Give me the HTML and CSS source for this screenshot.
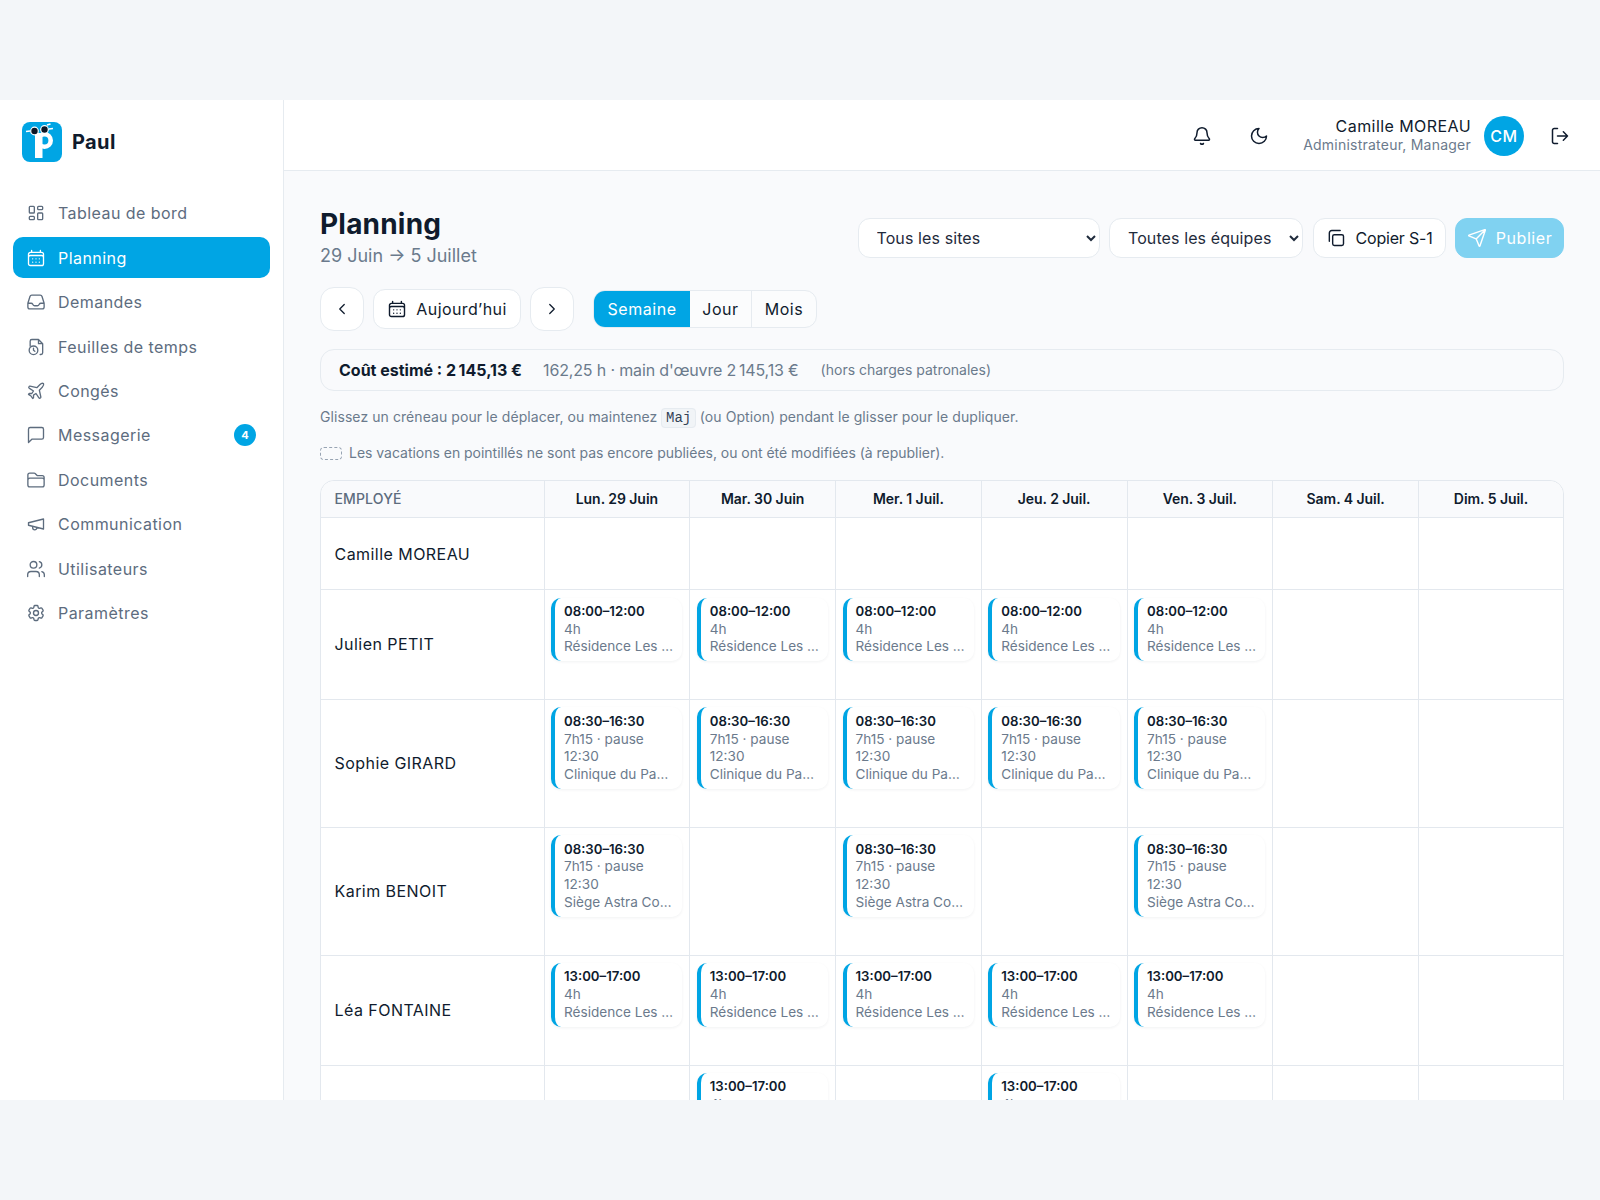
FILE: index.html
```html
<!DOCTYPE html>
<html lang="fr">
<head>
<meta charset="utf-8">
<title>Paul - Planning</title>
<link rel="stylesheet" href="styles.css">
</head>
<body>
<div class="app">
  <aside class="sidebar">
    <div class="brand">
      <svg class="logo" viewBox="0 0 40 40">
        <rect width="40" height="40" rx="8" fill="#00a5e4"/>
        <path d="M8 11l5 1.5V36h7.5V11z" fill="#fff"/>
        <circle cx="22.5" cy="18.5" r="6.2" fill="none" stroke="#fff" stroke-width="4.6"/>
        <path d="M4 9.5l4-.5M25 3l3.5-1M27 7l4-.5" stroke="#fff" stroke-width="1.4" fill="none"/>
        <circle cx="12.5" cy="9" r="4.4" fill="#fff"/><circle cx="12.5" cy="9" r="3.2" fill="#0d1726"/>
        <circle cx="22.5" cy="7.5" r="4.4" fill="#fff"/><circle cx="22.5" cy="7.5" r="3.2" fill="#0d1726"/>
      </svg>
      <span class="brand-name">Paul</span>
    </div>
    <nav class="nav">
      <a class="nav-item"><svg class="ico" viewBox="0 0 24 24"><path d="M5 4h4a1 1 0 0 1 1 1v6a1 1 0 0 1-1 1H5a1 1 0 0 1-1-1V5a1 1 0 0 1 1-1M5 16h4a1 1 0 0 1 1 1v2a1 1 0 0 1-1 1H5a1 1 0 0 1-1-1v-2a1 1 0 0 1 1-1M15 12h4a1 1 0 0 1 1 1v6a1 1 0 0 1-1 1h-4a1 1 0 0 1-1-1v-6a1 1 0 0 1 1-1M15 4h4a1 1 0 0 1 1 1v2a1 1 0 0 1-1 1h-4a1 1 0 0 1-1-1V5a1 1 0 0 1 1-1"/></svg>Tableau de bord</a>
      <a class="nav-item active"><svg class="ico" viewBox="0 0 24 24"><path d="M6.75 3v2.25M17.25 3v2.25M3 18.75V7.5a2.25 2.25 0 0 1 2.25-2.25h13.5A2.25 2.25 0 0 1 21 7.5v11.25m-18 0A2.25 2.25 0 0 0 5.25 21h13.5A2.25 2.25 0 0 0 21 18.75m-18 0v-7.5A2.25 2.25 0 0 1 5.25 9h13.5A2.25 2.25 0 0 1 21 11.25v7.5M8 13h.01M12 13h.01M16 13h.01M8 17h.01M12 17h.01M16 17h.01"/></svg>Planning</a>
      <a class="nav-item"><svg class="ico" viewBox="0 0 24 24"><path d="M2.25 13.5h3.86a2.25 2.25 0 0 1 2.012 1.244l.256.512a2.25 2.25 0 0 0 2.013 1.244h3.218a2.25 2.25 0 0 0 2.013-1.244l.256-.512a2.25 2.25 0 0 1 2.013-1.244h3.859m-19.5.338V18a2.25 2.25 0 0 0 2.25 2.25h15A2.25 2.25 0 0 0 21.75 18v-4.162c0-.224-.034-.447-.1-.661L19.24 5.338a2.25 2.25 0 0 0-2.15-1.588H6.911a2.25 2.25 0 0 0-2.15 1.588L2.35 13.177a2.25 2.25 0 0 0-.1.661Z"/></svg>Demandes</a>
      <a class="nav-item"><svg class="ico" viewBox="0 0 24 24"><path d="M5 11V5a2 2 0 0 1 2-2h8l5 5v11a2 2 0 0 1-2 2h-1M15 3v5h5"/><circle cx="9" cy="16" r="5.2"/><path d="M9 13.5V16l1.6 1.2"/></svg>Feuilles de temps</a>
      <a class="nav-item"><svg class="ico" viewBox="0 0 24 24"><path d="M17.8 19.2 16 11l3.5-3.5C21 6 21.5 4 21 3c-1-.5-3 0-4.5 1.5L13 8 4.8 6.2c-.5-.1-.9.1-1.1.5l-.3.5c-.2.5-.1 1 .3 1.3L9 12l-2 3H4l-1 1 3 2 2 3 1-1v-3l3-2 3.5 5.3c.3.4.8.5 1.3.3l.5-.2c.4-.3.6-.7.5-1.2z"/></svg>Congés</a>
      <a class="nav-item"><svg class="ico" viewBox="0 0 24 24"><path d="M21 15a2 2 0 0 1-2 2H7l-4 4V5a2 2 0 0 1 2-2h14a2 2 0 0 1 2 2z"/></svg>Messagerie<span class="badge">4</span></a>
      <a class="nav-item"><svg class="ico" viewBox="0 0 24 24"><path d="M2.25 12.75V12A2.25 2.25 0 0 1 4.5 9.75h15A2.25 2.25 0 0 1 21.75 12v.75m-8.69-6.44-2.12-2.12a1.5 1.5 0 0 0-1.061-.44H4.5A2.25 2.25 0 0 0 2.25 6v12a2.25 2.25 0 0 0 2.25 2.25h15A2.25 2.25 0 0 0 21.75 18V9a2.25 2.25 0 0 0-2.25-2.25h-5.379a1.5 1.5 0 0 1-1.06-.44Z"/></svg>Documents</a>
      <a class="nav-item"><svg class="ico" viewBox="0 0 24 24"><path d="M3 10.5v3L21 18V6zM8 15v1.5a2.5 2.5 0 0 0 5 0V16"/></svg>Communication</a>
      <a class="nav-item"><svg class="ico" viewBox="0 0 24 24"><path d="M16 21v-2a4 4 0 0 0-4-4H6a4 4 0 0 0-4 4v2M16 3.128a4 4 0 0 1 0 7.744M22 21v-2a4 4 0 0 0-3-3.87"/><circle cx="9" cy="7" r="4"/></svg>Utilisateurs</a>
      <a class="nav-item"><svg class="ico" viewBox="0 0 24 24"><path d="M9.594 3.94c.09-.542.56-.94 1.11-.94h2.593c.55 0 1.02.398 1.11.94l.213 1.281c.063.374.313.686.645.87.074.04.147.083.22.127.325.196.72.257 1.075.124l1.217-.456a1.125 1.125 0 0 1 1.37.49l1.296 2.247a1.125 1.125 0 0 1-.26 1.431l-1.003.827c-.293.241-.438.613-.43.992a7.723 7.723 0 0 1 0 .255c-.008.378.137.75.43.991l1.004.827c.424.35.534.955.26 1.43l-1.298 2.247a1.125 1.125 0 0 1-1.369.491l-1.217-.456c-.355-.133-.75-.072-1.076.124a6.47 6.47 0 0 1-.22.128c-.331.183-.581.495-.644.869l-.213 1.281c-.09.543-.56.94-1.11.94h-2.594c-.55 0-1.019-.398-1.11-.94l-.213-1.281c-.062-.374-.312-.686-.644-.87a6.52 6.52 0 0 1-.22-.127c-.325-.196-.72-.257-1.076-.124l-1.217.456a1.125 1.125 0 0 1-1.369-.49l-1.297-2.247a1.125 1.125 0 0 1 .26-1.431l1.004-.827c.292-.24.437-.613.43-.991a6.932 6.932 0 0 1 0-.255c.007-.38-.138-.751-.43-.992l-1.004-.827a1.125 1.125 0 0 1-.26-1.43l1.297-2.247a1.125 1.125 0 0 1 1.37-.491l1.216.456c.356.133.751.072 1.076-.124.072-.044.146-.086.22-.128.332-.183.582-.495.644-.869l.214-1.28Z"/><path d="M15 12a3 3 0 1 1-6 0 3 3 0 0 1 6 0Z"/></svg>Paramètres</a>
    </nav>
  </aside>
  <div class="main">
    <header class="topbar">
      <button class="icon-btn"><svg class="ico-top" viewBox="0 0 24 24"><path d="M10.268 21a2 2 0 0 0 3.464 0M3.262 15.326A1 1 0 0 0 4 17h16a1 1 0 0 0 .74-1.673C19.41 13.956 18 12.499 18 8A6 6 0 0 0 6 8c0 4.499-1.411 5.956-2.738 7.326"/></svg></button>
      <button class="icon-btn"><svg class="ico-top" viewBox="0 0 24 24"><path d="M12 3a6 6 0 0 0 9 9 9 9 0 1 1-9-9Z"/></svg></button>
      <div class="user">
        <div class="user-name">Camille MOREAU</div>
        <div class="user-role">Administrateur, Manager</div>
      </div>
      <div class="avatar">CM</div>
      <button class="icon-btn"><svg class="ico-top" viewBox="0 0 24 24"><path d="M9 21H5a2 2 0 0 1-2-2V5a2 2 0 0 1 2-2h4M16 17l5-5-5-5M21 12H9"/></svg></button>
    </header>
    <main class="content">
      <div class="page-head">
        <div>
          <h1 class="title">Planning</h1>
          <div class="subtitle">29 Juin → 5 Juillet</div>
        </div>
        <div class="actions">
          <select class="select select-site"><option>Tous les sites</option></select>
          <select class="select select-team"><option>Toutes les équipes</option></select>
          <button class="btn btn-copy"><svg class="ico-btn" viewBox="0 0 24 24"><rect x="8" y="8" width="13" height="13" rx="2"/><path d="M4 16V6a3 3 0 0 1 3-3h10"/></svg>Copier S-1</button>
          <button class="btn btn-primary"><svg class="ico-btn" viewBox="0 0 24 24"><path d="M14.536 21.686a.5.5 0 0 0 .937-.024l6.5-19a.496.496 0 0 0-.635-.635l-19 6.5a.5.5 0 0 0-.024.937l7.93 3.18a2 2 0 0 1 1.112 1.11zM21.854 2.147l-10.94 10.939"/></svg>Publier</button>
        </div>
      </div>
      <div class="toolbar">
        <button class="btn btn-square"><svg class="ico-btn" viewBox="0 0 24 24"><path d="m15 18-6-6 6-6"/></svg></button>
        <button class="btn btn-today"><svg class="ico-btn" viewBox="0 0 24 24"><path d="M6.75 3v2.25M17.25 3v2.25M3 18.75V7.5a2.25 2.25 0 0 1 2.25-2.25h13.5A2.25 2.25 0 0 1 21 7.5v11.25m-18 0A2.25 2.25 0 0 0 5.25 21h13.5A2.25 2.25 0 0 0 21 18.75m-18 0v-7.5A2.25 2.25 0 0 1 5.25 9h13.5A2.25 2.25 0 0 1 21 11.25v7.5M8 13h.01M12 13h.01M16 13h.01M8 17h.01M12 17h.01M16 17h.01"/></svg>Aujourd’hui</button>
        <button class="btn btn-square"><svg class="ico-btn" viewBox="0 0 24 24"><path d="m9 18 6-6-6-6"/></svg></button>
        <div class="segment">
          <span class="seg seg-week">Semaine</span>
          <span class="seg seg-day">Jour</span>
          <span class="seg seg-month">Mois</span>
        </div>
      </div>
      <div class="cost">
        <strong class="cost-main">Coût estimé : 2&#8201;145,13 €</strong>
        <span class="cost-detail">162,25 h · main d'œuvre 2&#8201;145,13 €</span>
        <span class="cost-note">(hors charges patronales)</span>
      </div>
      <p class="hint">Glissez un créneau pour le déplacer, ou maintenez <kbd class="kbd">Maj</kbd> (ou Option) pendant le glisser pour le dupliquer.</p>
      <p class="legend"><span class="dashed"></span>Les vacations en pointillés ne sont pas encore publiées, ou ont été modifiées (à republier).</p>
      <div class="grid">
        <div class="row row-head">
          <div class="cell cell-emp head-emp">EMPLOYÉ</div>
          <div class="cell head-day">Lun. 29 Juin</div>
          <div class="cell head-day">Mar. 30 Juin</div>
          <div class="cell head-day">Mer. 1 Juil.</div>
          <div class="cell head-day">Jeu. 2 Juil.</div>
          <div class="cell head-day">Ven. 3 Juil.</div>
          <div class="cell head-day">Sam. 4 Juil.</div>
          <div class="cell head-day">Dim. 5 Juil.</div>
        </div>
        <div class="row row-empty">
          <div class="cell cell-emp">Camille MOREAU</div>
          <div class="cell"></div><div class="cell"></div><div class="cell"></div><div class="cell"></div><div class="cell"></div><div class="cell"></div><div class="cell"></div>
        </div>
        <div class="row">
          <div class="cell cell-emp">Julien PETIT</div>
          <div class="cell cell-day"><div class="shift"><b>08:00–12:00</b><span>4h</span><span class="site">Résidence Les …</span></div></div>
          <div class="cell cell-day"><div class="shift"><b>08:00–12:00</b><span>4h</span><span class="site">Résidence Les …</span></div></div>
          <div class="cell cell-day"><div class="shift"><b>08:00–12:00</b><span>4h</span><span class="site">Résidence Les …</span></div></div>
          <div class="cell cell-day"><div class="shift"><b>08:00–12:00</b><span>4h</span><span class="site">Résidence Les …</span></div></div>
          <div class="cell cell-day"><div class="shift"><b>08:00–12:00</b><span>4h</span><span class="site">Résidence Les …</span></div></div>
          <div class="cell"></div><div class="cell"></div>
        </div>
        <div class="row">
          <div class="cell cell-emp">Sophie GIRARD</div>
          <div class="cell cell-day"><div class="shift"><b>08:30–16:30</b><span>7h15 · pause 12:30</span><span class="site">Clinique du Pa…</span></div></div>
          <div class="cell cell-day"><div class="shift"><b>08:30–16:30</b><span>7h15 · pause 12:30</span><span class="site">Clinique du Pa…</span></div></div>
          <div class="cell cell-day"><div class="shift"><b>08:30–16:30</b><span>7h15 · pause 12:30</span><span class="site">Clinique du Pa…</span></div></div>
          <div class="cell cell-day"><div class="shift"><b>08:30–16:30</b><span>7h15 · pause 12:30</span><span class="site">Clinique du Pa…</span></div></div>
          <div class="cell cell-day"><div class="shift"><b>08:30–16:30</b><span>7h15 · pause 12:30</span><span class="site">Clinique du Pa…</span></div></div>
          <div class="cell"></div><div class="cell"></div>
        </div>
        <div class="row">
          <div class="cell cell-emp">Karim BENOIT</div>
          <div class="cell cell-day"><div class="shift"><b>08:30–16:30</b><span>7h15 · pause 12:30</span><span class="site">Siège Astra Co…</span></div></div>
          <div class="cell cell-day"></div>
          <div class="cell cell-day"><div class="shift"><b>08:30–16:30</b><span>7h15 · pause 12:30</span><span class="site">Siège Astra Co…</span></div></div>
          <div class="cell cell-day"></div>
          <div class="cell cell-day"><div class="shift"><b>08:30–16:30</b><span>7h15 · pause 12:30</span><span class="site">Siège Astra Co…</span></div></div>
          <div class="cell"></div><div class="cell"></div>
        </div>
        <div class="row">
          <div class="cell cell-emp">Léa FONTAINE</div>
          <div class="cell cell-day"><div class="shift"><b>13:00–17:00</b><span>4h</span><span class="site">Résidence Les …</span></div></div>
          <div class="cell cell-day"><div class="shift"><b>13:00–17:00</b><span>4h</span><span class="site">Résidence Les …</span></div></div>
          <div class="cell cell-day"><div class="shift"><b>13:00–17:00</b><span>4h</span><span class="site">Résidence Les …</span></div></div>
          <div class="cell cell-day"><div class="shift"><b>13:00–17:00</b><span>4h</span><span class="site">Résidence Les …</span></div></div>
          <div class="cell cell-day"><div class="shift"><b>13:00–17:00</b><span>4h</span><span class="site">Résidence Les …</span></div></div>
          <div class="cell"></div><div class="cell"></div>
        </div>
        <div class="row">
          <div class="cell cell-emp"></div>
          <div class="cell cell-day"></div>
          <div class="cell cell-day"><div class="shift"><b>13:00–17:00</b><span>4h</span></div></div>
          <div class="cell cell-day"></div>
          <div class="cell cell-day"><div class="shift"><b>13:00–17:00</b><span>4h</span></div></div>
          <div class="cell"></div><div class="cell"></div><div class="cell"></div>
        </div>
      </div>
    </main>
  </div>
</div>
</body>
</html>
```
FILE: styles.css
```css
* { box-sizing: border-box; }
html, body { margin: 0; height: 100%; }
body {
  background: #f3f6f9;
  padding: 100px 0;
  font-family: Inter, "Noto Sans", sans-serif;
  letter-spacing: .55px;
  color: #0f1b2d;
}
button, select { font: inherit; letter-spacing: inherit; color: inherit; }
.app { display: flex; height: 1000px; overflow: hidden; background: #fff; }

/* sidebar */
.sidebar { width: 284px; flex: none; background: #fff; border-right: 1px solid #e6ebf0; }
.brand { display: flex; align-items: center; gap: 10px; padding: 22px 0 0 22px; height: 40px; box-sizing: content-box; margin-bottom: 31px; }
.logo { width: 40px; height: 40px; flex: none; }
.brand-name { font-size: 20px; font-weight: 700; letter-spacing: .4px; }
.nav { display: flex; flex-direction: column; gap: 4px; padding: 0 13px; }
.nav-item { display: flex; align-items: center; gap: 12px; height: 40.44px; padding: 0 14px 0 13px; border-radius: 10px; font-size: 16px; letter-spacing: .45px; color: #5d6c7e; }
.nav-item.active { background: #00a5e4; color: #fff; }
.ico { width: 20px; height: 20px; flex: none; fill: none; stroke: currentColor; stroke-width: 1.6; stroke-linecap: round; stroke-linejoin: round; }
.badge { margin-left: auto; width: 22px; height: 22px; border-radius: 50%; background: #00a5e4; color: #fff; font-size: 11px; font-weight: 700; display: flex; align-items: center; justify-content: center; letter-spacing: 0; }

/* topbar */
.main { flex: 1; min-width: 0; display: flex; flex-direction: column; background: #f9fafc; }
.topbar { height: 71px; flex: none; background: #fff; border-bottom: 1px solid #e6ebf0; display: flex; align-items: center; justify-content: flex-end; padding: 1px 20px 0 0; }
.icon-btn { width: 40px; height: 40px; border: 0; background: none; padding: 0; display: flex; align-items: center; justify-content: center; color: #0f1b2d; margin-right: 17px; }
.icon-btn:last-child { margin-right: 0; margin-left: 16px; }
.ico-top { width: 20px; height: 20px; fill: none; stroke: currentColor; stroke-width: 1.8; stroke-linecap: round; stroke-linejoin: round; }
.user { text-align: right; margin: -2px 13px 0 7px; }
.user-name { font-size: 16px; line-height: 20px; letter-spacing: .43px; }
.user-role { font-size: 14px; line-height: 18px; letter-spacing: .23px; color: #6b7a8c; }
.avatar { width: 40px; height: 40px; border-radius: 50%; background: #00a5e4; color: #fff; font-size: 16px; font-weight: 500; display: flex; align-items: center; justify-content: center; }

/* content */
.content { flex: 1; min-height: 0; padding: 36px 36px 0 36px; }
.page-head { display: flex; justify-content: space-between; align-items: center; height: 62px; }
.title { margin: 0; font-size: 28px; line-height: 34px; padding-bottom: 2px; font-weight: 700; letter-spacing: .2px; }
.subtitle { font-size: 18px; line-height: 26px; letter-spacing: 0; color: #6b7a8c; }
.actions { display: flex; gap: 9.5px; align-items: center; }
.select { height: 40px; border: 1px solid #e6ebf0; border-radius: 12px; background: #fff; padding: 0 6px 0 14px; font-size: 16px; letter-spacing: .1px; color: #1f2b3c; }
.select-site { width: 242px; }
.select-team { width: 194px; }
.btn { height: 40px; display: inline-flex; align-items: center; justify-content: center; gap: 9px; border: 1px solid #e6ebf0; border-radius: 12px; background: #fff; padding: 0 14px; font-size: 16px; white-space: nowrap; color: #0f1b2d; }
.ico-btn { width: 20px; height: 20px; flex: none; fill: none; stroke: currentColor; stroke-width: 1.7; stroke-linecap: round; stroke-linejoin: round; }
.btn-copy { width: 133px; padding: 0 8px; gap: 10px; letter-spacing: -.2px; }
.btn-primary { width: 109px; padding: 0 8px; background: #80d2f1; border-color: #80d2f1; color: #fff; }
.toolbar { display: flex; align-items: center; gap: 9px; height: 44px; margin-top: 18px; }
.btn-square { width: 44px; height: 44px; padding: 0; border-radius: 14px; }
.btn-today { width: 148px; letter-spacing: .4px; }
.btn-square svg { width: 18px; height: 18px; }
.segment { margin-left: 10px; display: flex; height: 38px; border: 1px solid #e6ebf0; border-radius: 12px; overflow: hidden; background: #fbfcfd; font-size: 16px; }
.seg { display: flex; align-items: center; justify-content: center; }
.seg-week { width: 96px; background: #00a5e4; color: #fff; }
.seg-day { width: 62px; border-right: 1px solid #e6ebf0; }
.seg-month { width: 64px; }
.cost { margin-top: 18px; height: 41.5px; display: flex; align-items: center; border: 1px solid #e6ebf0; border-radius: 14px; padding: 0 18px; letter-spacing: 0; }
.cost-main { font-size: 16px; font-weight: 700; }
.cost-detail { margin-left: 21px; font-size: 16px; color: #6b7a8c; letter-spacing: -.15px; }
.cost-note { margin-left: 22px; font-size: 14px; color: #6b7a8c; }
.hint, .legend { margin: 0; height: 22px; font-size: 14px; line-height: 22px; letter-spacing: 0; color: #6b7a8c; }
.hint { margin-top: 15.5px; letter-spacing: .07px; }
.legend { margin-top: 14px; display: flex; align-items: center; gap: 7px; letter-spacing: -.02px; }
.kbd { font-family: "Liberation Mono", monospace; font-size: 14px; line-height: 1; padding: 1px 3.5px; background: #f1f4f7; border: 1px solid #e6ebf0; border-radius: 4px; color: #334155; }
.dashed { width: 22px; height: 13px; border: 1px dashed #98a4b3; border-radius: 4px; flex: none; }

/* table */
.grid { margin-top: 16px; border: 1px solid #e3e8ee; border-radius: 14px 14px 0 0; background: #fff; }
.row { display: grid; grid-template-columns: 223.5px repeat(6, 145.75px) 1fr; border-bottom: 1px solid #e3e8ee; }
.row:last-child { border-bottom: 0; }
.cell { border-right: 1px solid #e3e8ee; min-width: 0; }
.cell:last-child { border-right: 0; }
.cell-emp { display: flex; align-items: center; padding-left: 13.5px; font-size: 16px; letter-spacing: .45px; }
.row-head { height: 37px; background: #f9fafc; border-radius: 14px 14px 0 0; }
.head-emp, .head-day { padding-bottom: 1.5px; }
.head-emp { font-size: 14px; font-weight: 500; color: #5d6c7e; letter-spacing: .14px; }
.head-day { display: flex; align-items: center; justify-content: center; font-size: 14px; font-weight: 600; letter-spacing: -.05px; }
.row-empty { height: 72px; }
.cell-day { padding: 7.5px 7px 37.5px 6.5px; }
.shift { display: flex; flex-direction: column; background: #fff; border-left: 4px solid #00a5e4; border-radius: 10px; padding: 5.3px 8px 5.3px 9px; box-shadow: 0 1px 3px rgba(15, 27, 45, .06); font-size: 13.6px; line-height: 17.8px; letter-spacing: 0; color: #6b7a8c; }
.shift b { font-size: 13.2px; font-weight: 600; color: #0f1b2d; }
.site { white-space: nowrap; }
```
